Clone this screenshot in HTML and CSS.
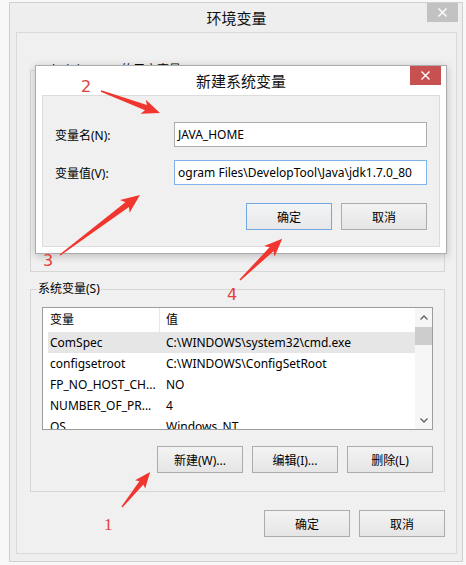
FILE: index.html
```html
<!DOCTYPE html>
<html lang="zh-CN">
<head>
<meta charset="utf-8">
<title>环境变量</title>
<link rel="stylesheet" href="styles.css">
</head>
<body>
<div class="window">
  <div class="titlebar">
    <span></span>
    <span class="title">环境变量</span>
    <span class="close close-gray"><svg width="9" height="9" viewBox="0 0 9 9"><path d="M0.5 0.5 L8.5 8.5 M8.5 0.5 L0.5 8.5" stroke="#fff" stroke-width="1.4" fill="none"/></svg></span>
  </div>
  <div class="content">
    <fieldset class="group group-user">
      <legend>Administrator 的用户变量(U)</legend>
      <div class="user-body"></div>
    </fieldset>
    <fieldset class="group group-sys">
      <legend>系统变量(S)</legend>
      <div class="sys-body">
        <div class="list">
          <div class="list-main">
            <div class="row head"><span class="c1">变量</span><span class="c2">值</span></div>
            <div class="row sel"><span class="c1">ComSpec</span><span class="c2">C:\WINDOWS\system32\cmd.exe</span></div>
            <div class="row"><span class="c1">configsetroot</span><span class="c2">C:\WINDOWS\ConfigSetRoot</span></div>
            <div class="row"><span class="c1">FP_NO_HOST_CH...</span><span class="c2">NO</span></div>
            <div class="row"><span class="c1">NUMBER_OF_PR...</span><span class="c2">4</span></div>
            <div class="row"><span class="c1">OS</span><span class="c2">Windows_NT</span></div>
          </div>
          <div class="scrollbar">
            <span class="sb-arrow sb-up"><svg width="8" height="5" viewBox="0 0 8 5"><path d="M0.5 4.5 L4 1 L7.5 4.5" stroke="#606060" stroke-width="1.3" fill="none"/></svg></span>
            <span class="sb-thumb"></span>
            <span class="sb-track"></span>
            <span class="sb-arrow sb-down"><svg width="8" height="5" viewBox="0 0 8 5"><path d="M0.5 0.5 L4 4 L7.5 0.5" stroke="#606060" stroke-width="1.3" fill="none"/></svg></span>
          </div>
        </div>
        <div class="btn-row">
          <button class="btn">新建(W)...</button>
          <button class="btn">编辑(I)...</button>
          <button class="btn">删除(L)</button>
        </div>
      </div>
    </fieldset>
    <div class="btn-row bottom">
      <button class="btn">确定</button>
      <button class="btn">取消</button>
    </div>
  </div>
</div>

<div class="dialog">
  <div class="titlebar">
    <span></span>
    <span class="title">新建系统变量</span>
    <span class="close close-red"><svg width="9" height="9" viewBox="0 0 9 9"><path d="M0.5 0.5 L8.5 8.5 M8.5 0.5 L0.5 8.5" stroke="#fff" stroke-width="1.4" fill="none"/></svg></span>
  </div>
  <div class="panel">
    <div class="form">
      <label class="lbl">变量名(N):</label>
      <div class="field">JAVA_HOME</div>
      <label class="lbl">变量值(V):</label>
      <div class="field focus">ogram Files\DevelopTool\Java\jdk1.7.0_80</div>
    </div>
    <div class="btn-row">
      <button class="btn default">确定</button>
      <button class="btn">取消</button>
    </div>
  </div>
</div>

<svg class="annot" width="466" height="565" viewBox="0 0 466 565">
  <g fill="#f0362e">
    <g transform="translate(101,91) rotate(20.4)"><polygon points="0,-0.7 48,-2.8 45,-7.5 63,0 45,7.5 48,2.8 0,0.7"/></g>
    <g transform="translate(60,255) rotate(-36.9)"><polygon points="0,-0.7 84,-3 81,-8 100,0 81,8 84,3 0,0.7"/></g>
    <g transform="translate(240,280) rotate(-44.3)"><polygon points="0,-0.7 44,-2.8 41,-7.5 59,0 41,7.5 44,2.8 0,0.7"/></g>
    <g transform="translate(122,507) rotate(-51.3)"><polygon points="0,-0.6 31,-2.6 29,-6.5 45,0 29,6.5 31,2.6 0,0.6"/></g>
  </g>
  <g class="num" fill="#e2403c">
    <text x="81" y="92">2</text>
    <text x="43" y="266">3</text>
    <text x="227" y="300">4</text>
    <text class="serif" x="104" y="530">1</text>
  </g>
</svg>
</body>
</html>
```

FILE: styles.css
```css
* {
  box-sizing: border-box;
}

html,
body {
  margin: 0;
}

body {
  position: relative;
  width: 466px;
  height: 565px;
  overflow: hidden;
  padding: 2px 3px 0 9px;
  background: #f8f8f8;
  font-family: "Noto Sans", "Noto Sans CJK SC", sans-serif;
  font-size: 12px;
  color: #000;
}

/* ---------- outer window ---------- */
.window {
  width: 454px;
  height: 560px;
  border: 1px solid #cfcfcf;
  background: #eeeeee;
  padding: 0 5px 7px 6px;
  display: flex;
  flex-direction: column;
}

.titlebar {
  height: 29px;
  flex: none;
  display: grid;
  grid-template-columns: 1fr auto 1fr;
  align-items: start;
}

.title {
  font-size: 15px;
  line-height: 29px;
  padding-top: 1px;
  color: #111;
  white-space: nowrap;
}

.close {
  justify-self: end;
  margin-right: -1px;
  width: 31px;
  height: 19px;
  display: flex;
  align-items: center;
  justify-content: center;
}

.close-gray {
  background: #c2c2c2;
}

.close-red {
  background: #c75050;
}

.content {
  flex: none;
  height: 522px;
  border: 1px solid #d9d9d9;
  background: #f0f0f0;
  padding: 0 11px 16px 13px;
  display: flex;
  flex-direction: column;
}

/* ---------- group boxes ---------- */
.group {
  margin: 0;
  padding: 0;
  min-width: 0;
  border: 1px solid #d6d6d6;
}

.group legend {
  padding: 0 1px;
  margin-left: 6px;
  font-size: 12px;
  line-height: 16px;
  white-space: nowrap;
}

.group-user {
  margin-top: 29px;
}

.group-user legend {
  margin-left: 8px;
}

.user-body {
  height: 193px;
}

.group-sys {
  margin-top: 9px;
}

.sys-body {
  padding: 10px 11px 18px;
}

/* ---------- list view ---------- */
.list {
  height: 123px;
  border: 1px solid #9c9c9c;
  background: #fff;
  display: flex;
}

.list-main {
  flex: 1;
  min-width: 0;
  overflow: hidden;
  padding-left: 5px;
}

.row {
  display: flex;
  height: 21px;
  line-height: 21px;
  white-space: nowrap;
}

.row.head {
  height: 24px;
  line-height: 24px;
}

.c1 {
  width: 112px;
  flex: none;
  padding-left: 2px;
  overflow: hidden;
}

.head .c1 {
  border-right: 1px solid #e8e8e8;
}

.c2 {
  flex: 1;
  padding-left: 6px;
  overflow: hidden;
}

.row.sel {
  background: #e6e6e6;
}

.scrollbar {
  width: 17px;
  flex: none;
  background: #f6f6f6;
  display: flex;
  flex-direction: column;
}

.sb-arrow {
  display: flex;
  align-items: center;
  justify-content: center;
}

.sb-up {
  height: 19px;
}

.sb-down {
  height: 17px;
}

.sb-thumb {
  height: 18px;
  background: #cdcdcd;
}

.sb-track {
  flex: 1;
}

/* ---------- buttons ---------- */
.btn-row {
  display: flex;
  justify-content: flex-end;
  gap: 9px;
}

.btn {
  width: 86px;
  height: 27px;
  padding: 0;
  border: 1px solid #acacac;
  background: linear-gradient(#f3f3f3, #e5e5e5);
  font: inherit;
  font-size: 12px;
  color: #000;
}

.btn.default {
  border-color: #72a7df;
  background: linear-gradient(#f2f4f6, #e6e8ea);
}

.sys-body .btn-row {
  margin-top: 16px;
}

.btn-row.bottom {
  margin-top: 18px;
}

/* ---------- new variable dialog ---------- */
.dialog {
  position: absolute;
  left: 35px;
  top: 65px;
  width: 412px;
  height: 189px;
  background: #fff;
  border: 1px solid #acacac;
  box-shadow: 0 2px 8px rgba(0, 0, 0, 0.22);
  padding: 0 6px 6px;
  display: flex;
  flex-direction: column;
}

.panel {
  flex: 1;
  border: 1px solid #dcdcdc;
  background: #f0f0f0;
  padding: 26px 12px 0;
}

.form {
  display: grid;
  grid-template-columns: 1fr 253px;
  row-gap: 13px;
  align-items: center;
}

.field {
  height: 25px;
  border: 1px solid #abadb3;
  background: #fff;
  padding: 0 3px;
  line-height: 23px;
  white-space: nowrap;
  overflow: hidden;
}

.field.focus {
  border-color: #7eb4ea;
}

.panel .btn-row {
  margin-top: 18px;
}

/* ---------- annotations ---------- */
.annot {
  position: absolute;
  left: 0;
  top: 0;
  pointer-events: none;
}

.num text {
  font-family: "DejaVu Sans", "Liberation Sans", sans-serif;
  font-size: 16px;
}

.num text.serif {
  font-family: "Liberation Serif", serif;
  font-size: 17px;
}
```
